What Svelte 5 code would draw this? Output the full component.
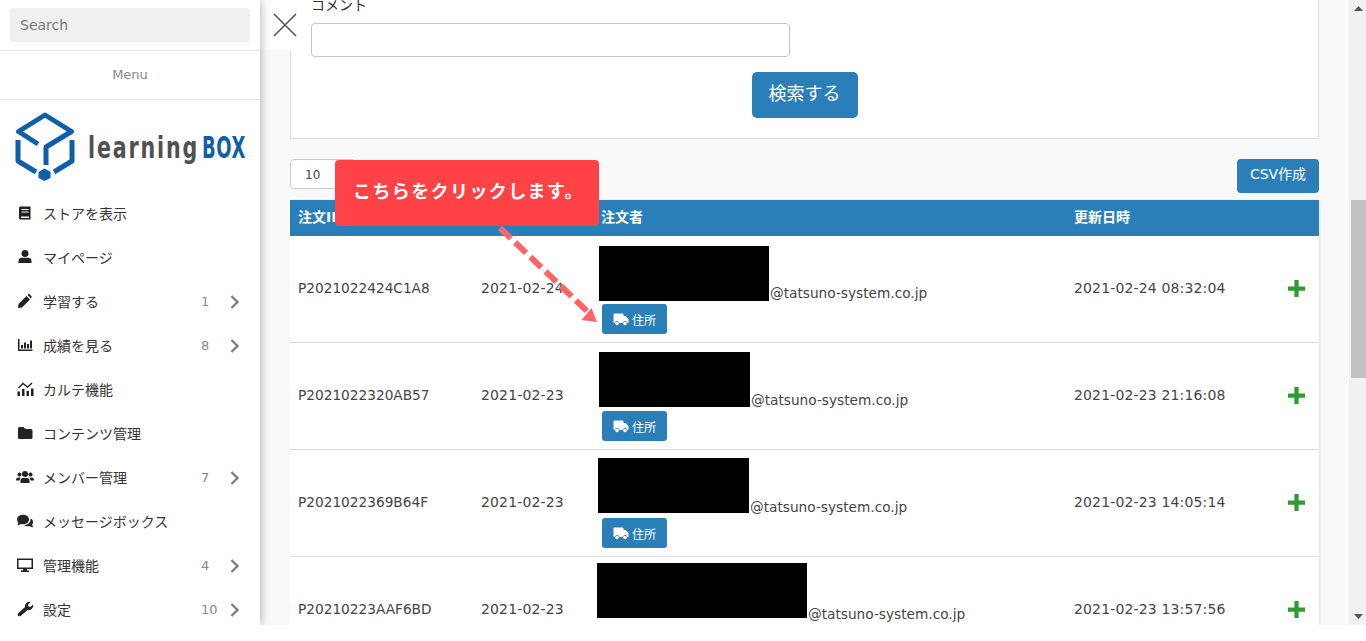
<script>
  const menu = [
    { icon: "book", label: "ストアを表示" },
    { icon: "user", label: "マイページ" },
    { icon: "pencil", label: "学習する", count: 1 },
    { icon: "bars", label: "成績を見る", count: 8 },
    { icon: "chart", label: "カルテ機能" },
    { icon: "folder", label: "コンテンツ管理" },
    { icon: "users", label: "メンバー管理", count: 7 },
    { icon: "chat", label: "メッセージボックス" },
    { icon: "desktop", label: "管理機能", count: 4 },
    { icon: "wrench", label: "設定", count: 10 },
  ];

  const orders = [
    { id: "P2021022424C1A8", date: "2021-02-24", block: 170, left: -2, raise: 0, updated: "2021-02-24 08:32:04" },
    { id: "P2021022320AB57", date: "2021-02-23", block: 151, left: -2, raise: 1, updated: "2021-02-23 21:16:08" },
    { id: "P2021022369B64F", date: "2021-02-23", block: 151, left: -3, raise: 2, updated: "2021-02-23 14:05:14" },
    { id: "P20210223AAF6BD", date: "2021-02-23", block: 210, left: -4, raise: 4, updated: "2021-02-23 13:57:56" },
  ];
</script>

<div class="page">
  <aside class="sidebar">
    <div class="search"><div class="search-box">Search</div></div>
    <div class="menu-title">Menu</div>
    <div class="logo">
      <svg width="260" height="91" viewBox="0 100 260 91">
        <g fill="none" stroke="#0f5ea8" stroke-width="5" stroke-linejoin="round">
          <path d="M38 144 L18.500 131.500 L45 115 L71.500 131.500 L46 147 V165" />
          <path d="M18 140 V161 L36 172" />
          <path d="M72 140 V161 L54 172" />
        </g>
        <path d="M44.500 168.500 L50.500 172 V178 L44.500 181 L38.500 178 V172 Z" fill="#0f5ea8" />
        <text x="88" y="158" class="logo-a" textLength="111" lengthAdjust="spacingAndGlyphs">learning</text>
        <text x="202" y="158" class="logo-b" textLength="44" lengthAdjust="spacingAndGlyphs">BOX</text>
      </svg>
    </div>
    <nav>
      {#each menu as item}
        <div class="item">
          <span class="icon">
            <svg width="20" height="16" viewBox="0 0 20 16" fill="#222">
              {#if item.icon === "book"}
                <path d="M5.500 1.500 H15.500 V14.500 H5.500 A1.500 1.500 0 0 1 4 13 V3 A1.500 1.500 0 0 1 5.500 1.500 Z M6.500 4 V5 H13.500 V4 Z M6.500 6.500 V7.500 H13.500 V6.500 Z M6 11.500 V13 H14 V11.500 Z" fill-rule="evenodd" />
              {:else if item.icon === "user"}
                <circle cx="10" cy="4.500" r="3.500" /><path d="M3.500 14 V12 A3.500 3.500 0 0 1 7 8.700 H13 A3.500 3.500 0 0 1 16.500 12 V14 Z" />
              {:else if item.icon === "pencil"}
                <path d="M3.500 11 L11.500 3 L15 6.500 L7 14.500 L3 15 Z M12.500 2 L14 .800 L16.800 3.600 L16 5.500 Z" />
              {:else if item.icon === "bars"}
                <path d="M3 2 H4.500 V12.500 H17.500 V14 H3 Z M6 8 H8 V11.500 H6 Z M9 5.500 H11 V11.500 H9 Z M12 7 H14 V11.500 H12 Z M15 3.500 H17 V11.500 H15 Z" />
              {:else if item.icon === "chart"}
                <path d="M2.500 10.500 H5 V15 H2.500 Z M7 8 H9.500 V15 H7 Z M11.500 10 H14 V15 H11.500 Z M16 7.500 H18.500 V15 H16 Z" /><path d="M3.500 7 L8 2.500 L12.500 6 L17 2" fill="none" stroke="#222" stroke-width="1.400" />
              {:else if item.icon === "folder"}
                <path d="M3 3.500 A1.500 1.500 0 0 1 4.500 2 H8.500 L10.500 4 H16 A1.500 1.500 0 0 1 17.500 5.500 V12.500 A1.500 1.500 0 0 1 16 14 H4.500 A1.500 1.500 0 0 1 3 12.500 Z" />
              {:else if item.icon === "users"}
                <circle cx="10" cy="5" r="3" /><circle cx="4.500" cy="5.500" r="2" /><circle cx="15.500" cy="5.500" r="2" />
                <path d="M5.500 14 V11.500 A2.500 2.500 0 0 1 8 9 H12 A2.500 2.500 0 0 1 14.500 11.500 V14 Z M1 11.500 A2.500 2.500 0 0 1 3.500 8.500 H5.500 L4.500 11.500 Z M19 11.500 A2.500 2.500 0 0 0 16.500 8.500 H14.500 L15.500 11.500 Z" />
              {:else if item.icon === "chat"}
                <ellipse cx="8" cy="6.500" rx="6" ry="4.800" /><path d="M3.500 9 L2.500 12.500 L7 10.500 Z" /><path d="M15.500 5.500 C18 6.500 19 9.500 17.200 11.500 L18 14.500 L14 13 C12 13.500 10 13 9 12 C13 12 16 9.500 15.500 5.500 Z" />
              {:else if item.icon === "desktop"}
                <path d="M2 1.500 H18 V12 H12 V13.500 H14 V15 H6 V13.500 H8 V12 H2 Z M3.500 3 V10.500 H16.500 V3 Z" fill-rule="evenodd" />
              {:else}
                <path d="M3 12.500 L10 6 A4.500 4.500 0 0 1 15.500 1 L13 3.500 L13.500 5.500 L15.500 6 L18 3.500 A4.500 4.500 0 0 1 12.500 9 L5.500 15 A1.800 1.800 0 0 1 3 12.500 Z" />
              {/if}
            </svg>
          </span>
          <span class="label">{item.label}</span>
          {#if item.count}
            <span class="count">{item.count}</span>
            <svg class="chev" width="10" height="14" viewBox="0 0 10 14"><path d="M1.500 1 L7.500 7 L1.500 13" fill="none" stroke="#808080" stroke-width="2.400" /></svg>
          {/if}
        </div>
      {/each}
    </nav>
  </aside>

  <button class="close" aria-label="閉じる">
    <svg width="24" height="24" viewBox="0 0 24 24"><path d="M1 1 L23 23 M23 1 L1 23" stroke="#555" stroke-width="1.600" /></svg>
  </button>

  <main>
    <section class="panel">
      <div class="field-label">コメント</div>
      <div class="input"></div>
      <div class="search-row"><span class="search-btn">検索する</span></div>
    </section>

    <div class="toolbar">
      <div class="select">10</div>
      <span class="csv">CSV作成</span>
    </div>

    <table>
      <thead>
        <tr>
          <th class="c1">注文ID</th>
          <th class="c2">注文日</th>
          <th class="c3">注文者</th>
          <th class="c4">更新日時</th>
          <th class="c5"></th>
        </tr>
      </thead>
      <tbody>
        {#each orders as o}
          <tr>
            <td class="order-id">{o.id}</td>
            <td>{o.date}</td>
            <td class="buyer">
              <div class="mail" style="margin-left: {o.left}px">
                <span class="redact" style="width: {o.block}px; margin-bottom: {o.raise}px"></span><span class="addr">@tatsuno-system.co.jp</span>
              </div>
              <span class="addr-btn">
                <svg width="16" height="13" viewBox="0 0 16 13" fill="#fff"><path d="M.500 1.500 A1 1 0 0 1 1.500 .500 H9.500 A1 1 0 0 1 10.500 1.500 V3 H12.500 L15.500 6 V10 H14 A2 2 0 0 0 10 10 H6 A2 2 0 0 0 2 10 H1.500 A1 1 0 0 1 .500 9 Z" /><circle cx="4" cy="10.500" r="1.800" /><circle cx="12" cy="10.500" r="1.800" /></svg>
                住所
              </span>
            </td>
            <td>{o.updated}</td>
            <td class="plus-cell">
              <svg width="17" height="17" viewBox="0 0 16 16"><path d="M6 0 H10 V6 H16 V10 H10 V16 H6 V10 H0 V6 H6 Z" fill="#2e9b33" /></svg>
            </td>
          </tr>
        {/each}
      </tbody>
    </table>
  </main>

  <div class="scrollbar">
    <svg class="up" width="9" height="5" viewBox="0 0 9 5"><path d="M0 5 L4.500 0 L9 5 Z" fill="#555" /></svg>
    <div class="thumb"></div>
    <svg class="down" width="9" height="5" viewBox="0 0 9 5"><path d="M0 0 L4.500 5 L9 0 Z" fill="#555" /></svg>
  </div>

  <div class="callout">こちらをクリックします。</div>
  <svg class="arrow" width="120" height="120" viewBox="0 0 120 120">
    <path d="M3 4 L91 88" stroke="#ff6468" stroke-width="6" stroke-dasharray="15 6" fill="none" />
    <path d="M100 98 L84.500 96 L94.500 84 Z" fill="#ff6468" />
  </svg>
</div>

<style>
  :global(body) {
    background: #fff;
  }

  .page {
    position: relative;
    display: flex;
    height: 625px;
    width: 1366px;
    overflow: hidden;
    background: #f9f9f9;
    font-family: "DejaVu Sans", "Noto Sans CJK JP", sans-serif;
    font-size: 14px;
    color: #444;
  }

  .sidebar {
    flex: none;
    width: 260px;
    background: #fff;
    box-shadow: 0 0 10px rgba(0, 0, 0, 0.35);
    z-index: 2;
  }

  .search {
    height: 51px;
    padding: 8px 10px 0;
    box-sizing: border-box;
    border-bottom: 1px solid #e4e4e4;
  }

  .search-box {
    height: 34px;
    line-height: 34px;
    padding-left: 10px;
    background: #f0f0f0;
    border-radius: 3px;
    color: #777;
  }

  .menu-title {
    height: 49px;
    line-height: 47px;
    box-sizing: border-box;
    text-align: center;
    font-size: 13px;
    color: #8a8a8a;
    border-bottom: 1px solid #e4e4e4;
  }

  .logo {
    height: 91px;
  }

  .logo svg {
    display: block;
  }

  .logo-a {
    font: bold 31px "Liberation Sans Narrow", "DejaVu Sans Condensed", sans-serif;
    letter-spacing: 2.5px;
    fill: #505050;
  }

  .logo-b {
    font: bold 31px "Liberation Sans Narrow", "DejaVu Sans Condensed", sans-serif;
    letter-spacing: 1px;
    fill: #0f5ea8;
  }

  .item {
    display: flex;
    align-items: center;
    height: 44px;
    padding-left: 15px;
    color: #333;
  }

  .icon {
    width: 20px;
    height: 16px;
    margin-right: 8px;
  }

  .icon svg {
    display: block;
  }

  .label {
    flex: 1;
  }

  .count {
    width: 29px;
    color: #888;
    font-size: 13px;
  }

  .chev {
    margin: 2px 20px 0 0;
  }

  .close {
    position: absolute;
    left: 260px;
    top: 0;
    width: 37px;
    height: 50px;
    padding: 0 0 0 13px;
    border: 0;
    background: #fff;
    z-index: 1;
    display: flex;
    align-items: center;
    box-sizing: border-box;
  }

  main {
    flex: none;
    width: 1029px;
    margin-left: 30px;
  }

  .panel {
    display: flow-root;
    height: 139px;
    box-sizing: border-box;
    padding: 0 20px;
    background: #fff;
    border: 1px solid #ddd;
    border-top: 0;
  }

  .field-label {
    height: 23px;
    margin-top: -5px;
    margin-bottom: 5px;
    color: #333;
    line-height: 20px;
  }

  .input {
    width: 479px;
    height: 34px;
    box-sizing: border-box;
    background: #fff;
    border: 1px solid #c4c4c4;
    border-radius: 4px;
  }

  .search-row {
    display: flex;
    justify-content: center;
    margin-top: 15px;
  }

  .search-btn {
    width: 106px;
    height: 46px;
    line-height: 44px;
    text-align: center;
    background: #2a7fb8;
    color: #fff;
    border-radius: 5px;
    font-size: 18px;
  }

  .toolbar {
    display: flex;
    justify-content: space-between;
    height: 61px;
    padding-top: 20px;
    box-sizing: border-box;
  }

  .select {
    width: 66px;
    height: 30px;
    line-height: 30px;
    padding-left: 14px;
    box-sizing: border-box;
    background: #fff;
    border: 1px solid #ccc;
    border-radius: 4px;
    font-size: 12px;
  }

  .csv {
    width: 82px;
    height: 34px;
    line-height: 31px;
    text-align: center;
    background: #2a7fb8;
    color: #fff;
    border-radius: 4px;
  }

  table {
    width: 1029px;
    border-collapse: separate;
    border-spacing: 0;
    table-layout: fixed;
    background: #fff;
    box-shadow: 1px 0 2px rgba(0, 0, 0, 0.1);
  }

  th {
    height: 36px;
    padding: 0 8px 4px;
    box-sizing: border-box;
    text-align: left;
    background: #2a7fb8;
    color: #fff;
    font-weight: bold;
  }

  td {
    height: 107px;
    padding: 0 8px 2px;
    box-sizing: border-box;
    border-bottom: 1px solid #ddd;
    color: #444;
    letter-spacing: 0.15px;
    vertical-align: middle;
  }

  .c1 { width: 183px; }
  .c2 { width: 120px; }
  .c3 { width: 473px; }
  .c4 { width: 213px; }

  .order-id {
    font-size: 13.7px;
    letter-spacing: 0;
  }

  .buyer {
    padding: 2px 8px 0;
    letter-spacing: 0;
  }

  .mail {
    display: flex;
    align-items: flex-end;
    height: 55px;
  }

  .redact {
    display: block;
    flex: none;
    height: 55px;
    background: #000;
  }

  .addr {
    margin-left: 1px;
    line-height: 16px;
    font-size: 13.7px;
    white-space: nowrap;
  }

  .addr-btn {
    display: flex;
    align-items: center;
    justify-content: center;
    gap: 3px;
    width: 65px;
    height: 30px;
    margin: 3px 0 0 1px;
    background: #2a7fb8;
    color: #fff;
    border-radius: 3px;
    font-size: 12px;
  }

  .plus-cell svg {
    display: block;
    margin-left: 1px;
  }

  .scrollbar {
    position: absolute;
    right: 0;
    top: 0;
    bottom: 0;
    width: 17px;
    background: #f1f1f1;
  }

  .thumb {
    position: absolute;
    left: 2px;
    top: 200px;
    width: 15px;
    height: 178px;
    background: #c1c1c1;
  }

  .up {
    position: absolute;
    left: 5px;
    top: 6px;
  }

  .down {
    position: absolute;
    left: 5px;
    bottom: 6px;
  }

  .callout {
    position: absolute;
    left: 335px;
    top: 160px;
    width: 264px;
    height: 66px;
    line-height: 64px;
    padding-left: 18px;
    box-sizing: border-box;
    background: #ff4245;
    color: #fff;
    border-radius: 4px;
    font-size: 18px;
    font-weight: 700;
    letter-spacing: 1.4px;
    z-index: 4;
  }

  .arrow {
    position: absolute;
    left: 497px;
    top: 224px;
    z-index: 3;
  }
</style>
